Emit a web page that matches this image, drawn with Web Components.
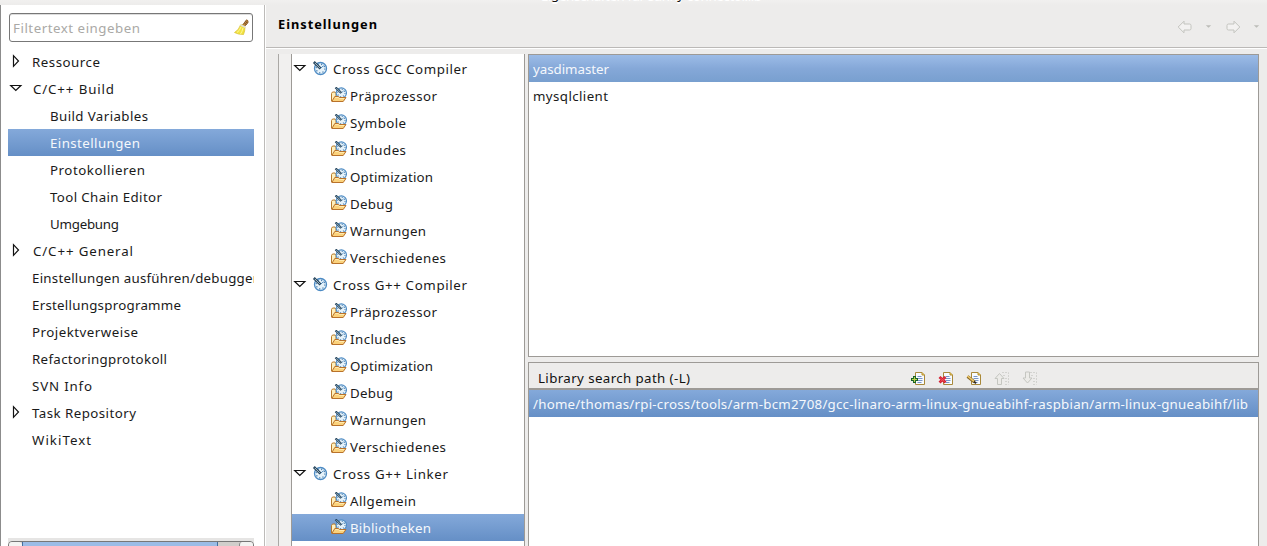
<!DOCTYPE html>
<html lang="de"><head><meta charset="utf-8"><title>Einstellungen</title>
<style>html,body{margin:0;height:100%;overflow:hidden;background:#edeceb}body{font:13.3px/27px "Noto Sans","Open Sans",sans-serif;color:#1a1a1a}</style></head><body>
<settings-window></settings-window>
<script>
const define=(name,html,after)=>customElements.define(name,class extends HTMLElement{
  connectedCallback(){ if(this.shadowRoot)return; const t=document.createElement('template');
    t.innerHTML=typeof html==='function'?html(this):html;
    this.attachShadow({mode:'open'}).append(t.content.cloneNode(true)); if(after)after(this); }
});
// Text label whose tracking is adjusted so that it fills the width given in "w".
define('ui-text','<style>:host{display:inline-block;white-space:nowrap;flex:none}span{display:inline-block}</style><span><slot></slot></span>',el=>{
  const w=+el.getAttribute('w'); if(!w)return;
  const s=el.shadowRoot.querySelector('span'), n=el.textContent.length;
  s.style.letterSpacing=((w-s.getBoundingClientRect().width)/(n-1))+'px';
});
const dial=`<circle cx="8.500" cy="8.500" r="6" fill="#e6f2f9" stroke="#4d8bc4" stroke-width="1.300"/><circle cx="8.500" cy="8.500" r="4.300" fill="none" stroke="#4f84b5" stroke-width="1.300" stroke-dasharray="1.200 2.180"/><path d="M8.500 8.500l3-3" stroke="#5d93c5"/><path d="M1.800 2l6.700 6.500" stroke="#27465f" stroke-width="2.600"/><path d="M2.800 2.900l5 5" stroke="#b9ccd3" stroke-width=".9"/>`;
const page=`<path d="M5.500 2.500h6.500l2.500 2.500v9.500h-9z" fill="#f8fbff" stroke="#a8883a"/><path d="M12 2.500v2.500h2.500" fill="#e6c65c" stroke="#b8912f"/><path d="M7.500 6.500h4M7.500 8.500h5M7.500 10.500h5M7.500 12.500h4" stroke="#7895c8"/>`;
const ghost=`<path d="M8 2.500h6.500v12M9 5.500h3M11 8.500h2M11 11.500h2M11 14.500h3" fill="none" stroke="#d3d3d0" stroke-dasharray="2 1"/>`;
const icons={
 right:'<path d="M5.500 2.700v10.600l5-5.300z" fill="#fff" stroke="#111" stroke-width="1.200"/>',
 down:'<path d="M2.700 5.500h10.200L7.800 10.500z" fill="#fff" stroke="#111" stroke-width="1.200"/>',
 dial,
 folder:`<path d="M.5 14V6.500l1-1.500H4l1 1.500V9" fill="#fff0bd" stroke="#b87a2b"/><g transform="translate(3 -1.300) scale(.86)">${dial}</g><path d="M.8 14.500L3.800 9.500h3.700l1.200 1h6.300l-2.800 4z" fill="#fbd27c" stroke="#b9722b"/><path d="M4.300 10.500h2.900l1 1h5" fill="none" stroke="#ffebb0"/>`,
 add:page+'<path d="M4.500 6v7M1 9.500h7" stroke="#176127" stroke-width="3"/><path d="M4.500 7v5M2 9.500h5" stroke="#b9d24e" stroke-width="1.200"/>',
 del:page+'<path d="M1.500 7l6 5.500M7.500 7l-6 5.500" stroke="#d51f32" stroke-width="2.800"/><path d="M2.500 8l4 3.500M6.500 8l-4 3.500" stroke="#f0545b"/>',
 edit:page+'<path d="M1.500 6.500l7 5.500" stroke="#8a6a2a" stroke-width="3"/><path d="M1.500 6l6.500 5.300" stroke="#f0c969" stroke-width="1.600"/><path d="M8 11.500l2 1.800" stroke="#332b22" stroke-width="1.800"/>',
 up:ghost+'<path d="M5.500 3.500L10 8.500H7.500v6h-4v-6H1z" fill="#ecebe8" stroke="#c5c6c1"/>',
 dn:ghost+'<path d="M5.500 13L10 8H7.500V2h-4v6H1z" fill="#ecebe8" stroke="#c5c6c1"/>',
 back:'<path d="M1.200 8L7 2.200V5h5.500q1.500 0 1.500 1.500v3q0 1.500-1.500 1.500H7v2.800z" fill="#f3f2f1" stroke="#c3c4bf"/>',
 fwd:'<path d="M14.800 8L9 2.200V5H3.500Q2 5 2 6.500v3Q2 11 3.500 11H9v2.800z" fill="#f3f2f1" stroke="#c3c4bf"/>',
 caret:'<path d="M4.800 6.300h5.400l-2.700 2.500z" fill="#bcbdb8"/>',
 broom:'<path d="M13.500 .8q2.200 .5 1.500 2.800l-3.500 4-2-1.500z" fill="#c18a42" stroke="#835523" stroke-width=".8"/><path d="M12.500 2.500l2 1.500M11.500 4.300l2 1.200" stroke="#6e451e"/><path d="M7.500 6q2-1 4.500 1.800 0 4.200-1.500 7.700Q5 15.500 1.500 13.500 6 11 7.500 6z" fill="#f2e43f" stroke="#dcc43a" stroke-width=".8"/><path d="M8 8q-1.500 4-4 5.500M10 9q-1 4-2.500 6" stroke="#fff69b" fill="none"/><path d="M7.500 6l4.800 2.200" stroke="#deded8" stroke-width="1.800"/>',
 left:'<path d="M10.500 4l-5 4 5 4z" fill="#aaa"/>', next:'<path d="M5.500 4l5 4-5 4z" fill="#555"/>'
};
define('ui-icon',el=>`<style>:host{display:block;flex:none;width:16px;height:16px}svg{display:block}</style><svg width="16" height="16" viewBox="0 0 16 16" fill="none">${icons[el.getAttribute('name')]}</svg>`);
define('tree-row',el=>{const a=el.getAttribute('arrow'),i=el.getAttribute('icon');
 return `<style>:host{display:flex;height:27px;align-items:center;box-sizing:border-box;overflow:hidden}
 :host([selected]){color:#f5f8fc;background:linear-gradient(#84a9da,#658fc6)}
 :host([soft]){background:linear-gradient(#9cbce7,#85a8d8 50%,#789fcf)}
 .a{width:16px;height:16px;flex:none;margin-bottom:2px} .i{margin:0 var(--icon-gap,3px) 1px 0} .t{margin-left:${el.getAttribute('indent')||0}px;display:flex;align-items:center} ui-text{padding-top:2px}
 </style>${a!==null?`<div class="a">${a?`<ui-icon name="${a}"></ui-icon>`:''}</div>`:''}<div class="t">${i?`<ui-icon class="i" name="${i}"></ui-icon>`:''}<ui-text w="${el.getAttribute('w')}">${el.getAttribute('label')}</ui-text></div>`});
define('nav-tree',()=>{
 const rows=[['right',8,'Ressource',68],['down',9,'C/C++ Build',81],['',26,'Build Variables',98],['',26,'Einstellungen',90,1],['',26,'Protokollieren',95],['',26,'Tool Chain Editor',112],['',26,'Umgebung',69],['right',9,'C/C++ General',100],['',8,'Einstellungen ausführen/debuggen',229],['',8,'Erstellungsprogramme',149],['',8,'Projektverweise',106],['',8,'Refactoringprotokoll',135],['',8,'SVN Info',60],['right',8,'Task Repository',104],['',8,'WikiText',59]];
 return `<style>:host{display:flex;flex-direction:column;box-sizing:border-box;width:265px;background:#fff;border-left:1px solid #8c8c8c;border-right:1px solid #bdbbb9;padding:8px 10px 0 7px}
 .f{box-sizing:border-box;height:29px;width:244px;margin:0 0 6px 1px;border:1px solid #777;border-radius:3px;display:flex;align-items:center;justify-content:space-between;padding:0 3px 0 3px;color:#aaa9a6;box-shadow:inset 0 1px #ddd}.f ui-text{padding-top:2px}.f ui-icon{margin-bottom:2px}
 .s{margin-top:auto;height:8px;flex:none;background:#e6e5e4;padding-top:3px;box-sizing:border-box;overflow:hidden}
 .b{display:flex;height:16px;border:1px solid #777;border-radius:4px;background:#d0cecb;box-sizing:border-box}.b i{box-sizing:border-box;width:13px;background:#f3f3f2;border-radius:3px;overflow:hidden}.b ui-icon{margin-left:-1px}.t{width:194px;background:#9bbce6;border:solid #456f9f;border-width:0 1px}.b i:last-child{width:14px;margin-left:auto;border-left:1px solid #888}</style>
 <div class="f"><ui-text w="127">Filtertext eingeben</ui-text><ui-icon name="broom"></ui-icon></div>
 ${rows.map(r=>`<tree-row arrow="${r[0]}" indent="${r[1]}" label="${r[2]}" w="${r[3]}" ${r[4]?'selected':''}></tree-row>`).join('')}
 <div class="s"><div class="b"><i><ui-icon name="left"></ui-icon></i><div class="t"></div><i><ui-icon name="next"></ui-icon></i></div></div>`});
define('tool-tree',()=>{
 const P=['Präprozessor',87],Sy=['Symbole',56],I=['Includes',56],O=['Optimization',83],D=['Debug',43],W=['Warnungen',76],V=['Verschiedenes',96];
 const groups=[['Cross GCC Compiler',134,[P,Sy,I,O,D,W,V]],['Cross G++ Compiler',134,[P,I,O,D,W,V]],['Cross G++ Linker',115,[['Allgemein',66],['Bibliotheken',81,1]]]];
 return `<style>:host{display:block;box-sizing:border-box;width:234px;border:solid #9d9a96;border-width:0 1px;background:#fff;padding-top:1px;overflow:hidden}.g{--icon-gap:5px}</style>`+
 groups.map(g=>`<tree-row class="g" arrow="down" indent="4" icon="dial" label="${g[0]}" w="${g[1]}"></tree-row>`+g[2].map(r=>`<tree-row arrow="" indent="23" icon="folder" label="${r[0]}" w="${r[1]}" ${r[2]?'selected':''}></tree-row>`).join('')).join('')});
define('list-panel','<style>:host{display:block;box-sizing:border-box;border:1px solid #9d9a96;background:#fff;overflow:hidden}</style><slot name="head"></slot><slot></slot>');
define('panel-head',`<style>:host{display:flex;box-sizing:border-box;height:27px;background:#edeceb;border-bottom:2px solid #9d9a96;padding-left:9px;align-items:center;color:#111}ui-text{width:153px;margin-top:6px}.tools{display:flex;gap:12px;margin:4px 0 0 219px}</style>
<ui-text w="152">Library search path (-L)</ui-text><div class="tools"><ui-icon name="add"></ui-icon><ui-icon name="del"></ui-icon><ui-icon name="edit"></ui-icon><ui-icon name="up"></ui-icon><ui-icon name="dn"></ui-icon></div>`);
define('page-header',`<style>:host{display:flex;box-sizing:border-box;height:43px;border-bottom:1px solid #bbb9b7;box-shadow:0 1px #fff;padding:5px 3px 0 12px;justify-content:space-between;align-items:flex-start;color:#000}b{font-weight:700;font-size:12.8px;padding-top:1px}.n{display:flex;margin-top:9px}.c{margin:0 8px}.c:last-child{margin:0 -1px 0 8px}</style>
<b><ui-text w="99">Einstellungen</ui-text></b><div class="n"><ui-icon name="back"></ui-icon><ui-icon class="c" name="caret"></ui-icon><ui-icon name="fwd"></ui-icon><ui-icon class="c" name="caret"></ui-icon></div>`);
define('settings-window',`<style>:host{display:grid;grid-template:5px 541px/265px 1fr;width:1267px;height:546px;overflow:hidden;background:#edeceb}
.title{grid-column:1/3;overflow:hidden;height:5px;padding-left:541px;display:flex;align-items:flex-start;text-shadow:0 1px #fff,0 2px #fff;background:linear-gradient(#f1f0ef,#edeceb);color:#111}.title ui-text{margin-top:-19px}
main{display:grid;grid-template-rows:43px 1fr;min-width:0;border-left:1px solid #fff}
.body{display:grid;grid-template-columns:12px 13px 234px 3px 731px;padding-top:6px;min-height:0}
.gut{border-left:1px solid #aaa8a5;background:#f1f0ef;margin-left:0}.lists{display:grid;grid-template-rows:303px 1fr;gap:5px;min-height:0}list-panel:last-child{border-bottom:0}
list-panel tree-row{padding-left:4px}</style>
<div class="title"><ui-text w="221">Eigenschaften für sunny connector.lib</ui-text></div>
<nav-tree></nav-tree>
<main><page-header></page-header><div class="body"><div></div><div class="gut"></div><tool-tree></tool-tree><div></div><div class="lists">
<list-panel><tree-row label="yasdimaster" w="76" selected soft></tree-row><tree-row label="mysqlclient" w="75"></tree-row></list-panel>
<list-panel><panel-head slot="head"></panel-head><tree-row label="/home/thomas/rpi-cross/tools/arm-bcm2708/gcc-linaro-arm-linux-gnueabihf-raspbian/arm-linux-gnueabihf/lib" w="715" selected></tree-row></list-panel></div></div></main>`);
</script></body></html>
